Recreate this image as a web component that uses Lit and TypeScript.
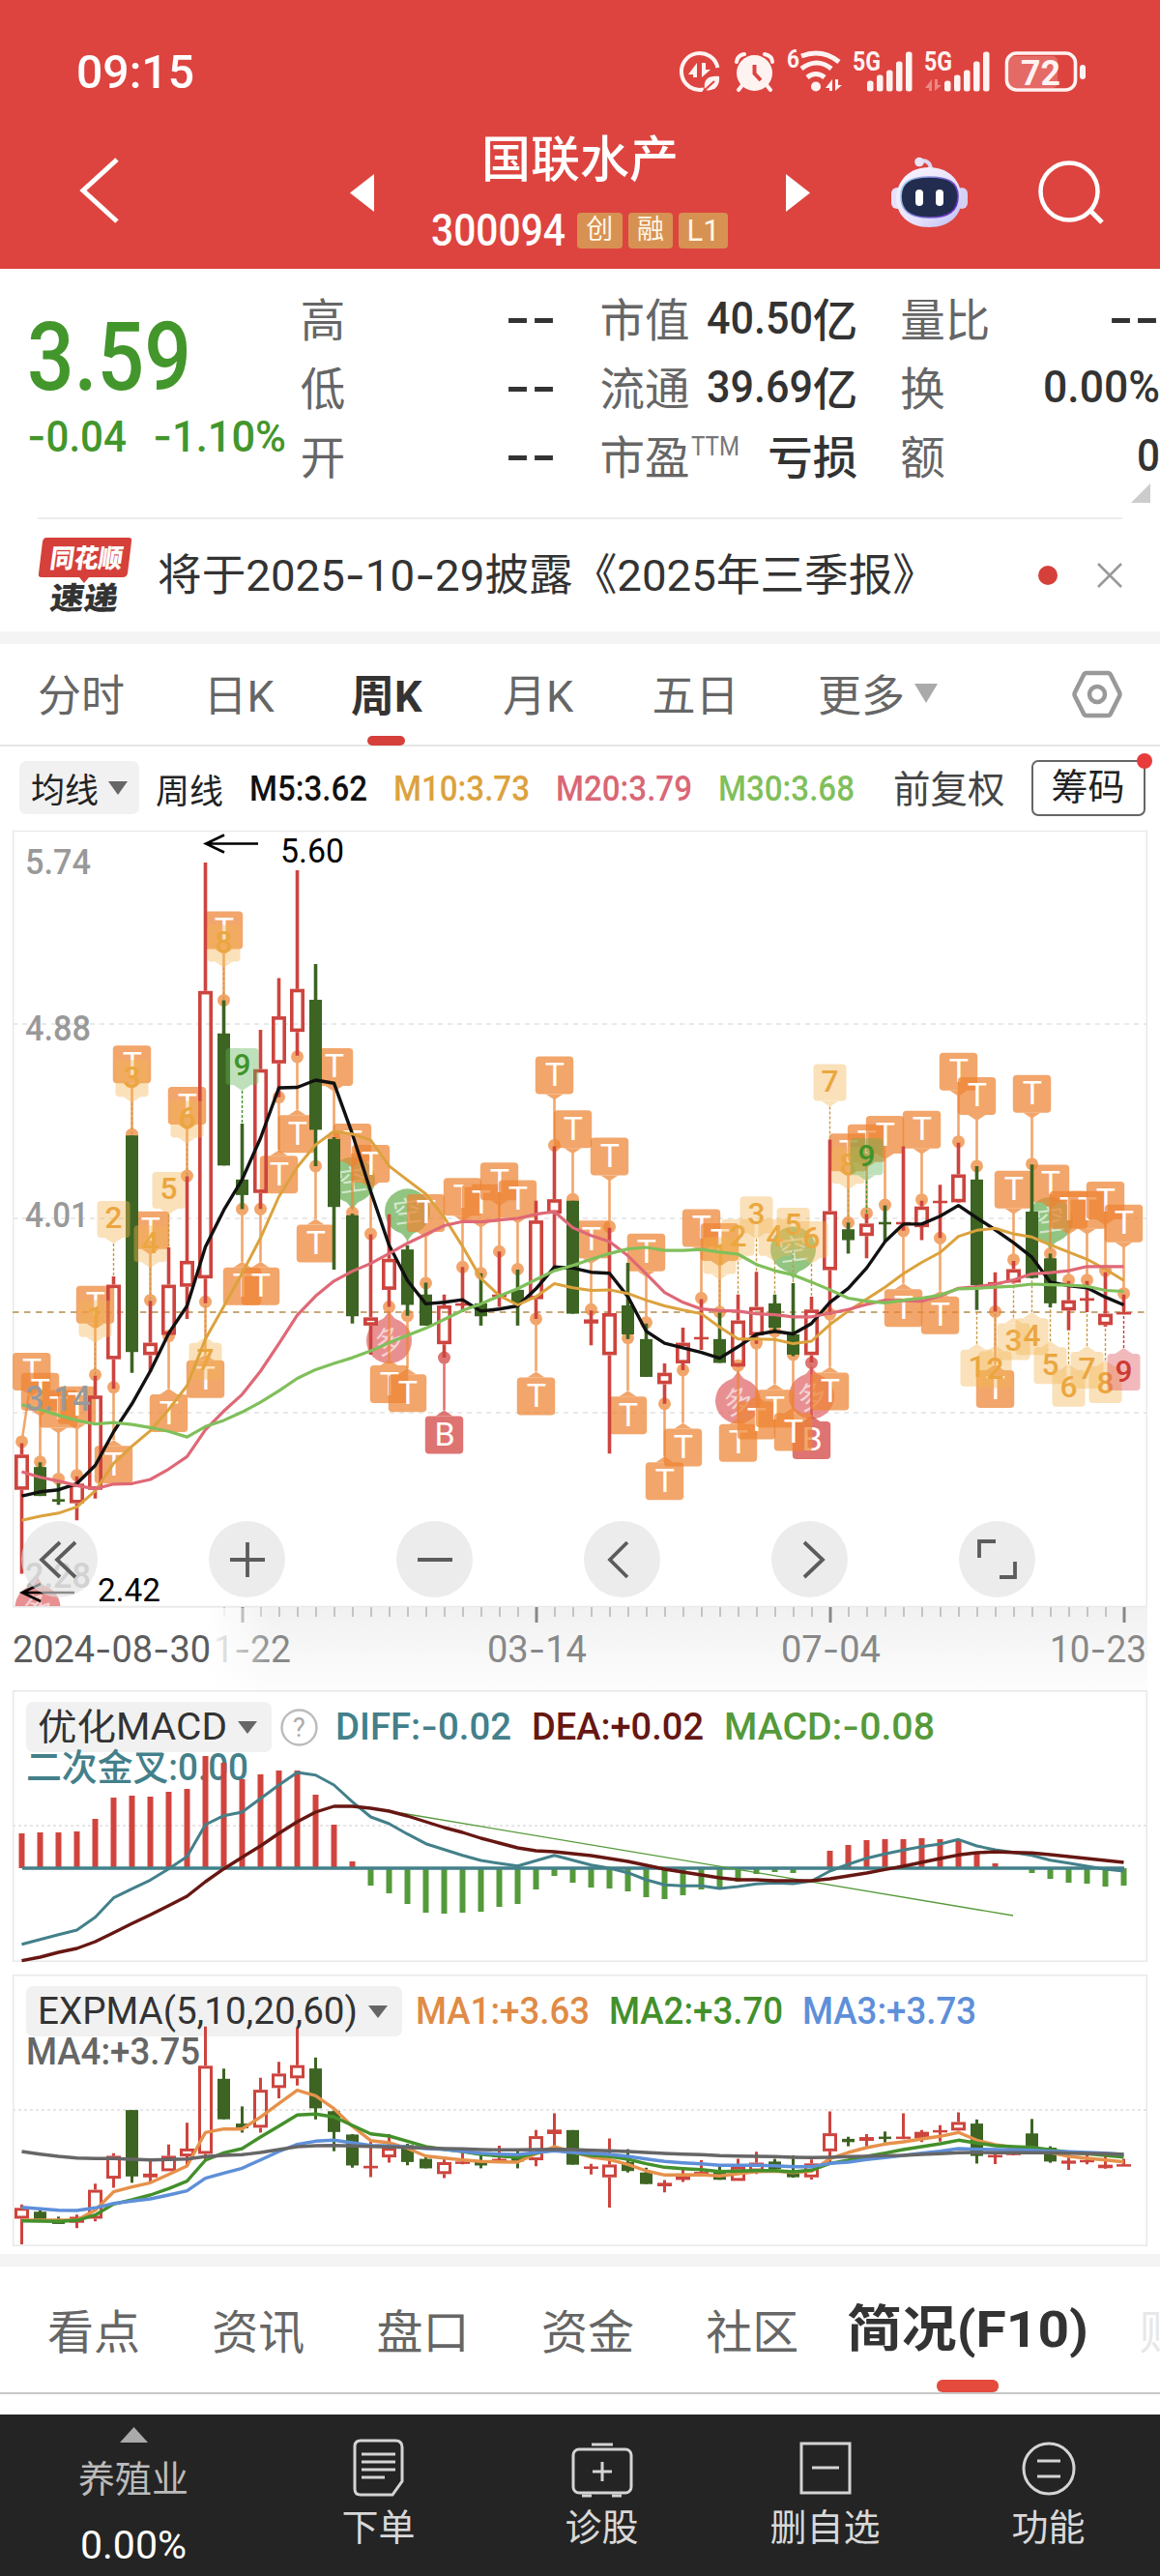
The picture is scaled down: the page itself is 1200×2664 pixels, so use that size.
import { LitElement, html, svg, css } from 'lit';
import { customElement, property } from 'lit/decorators.js';

const STEP = 19;
const FIRST_X = 22.5;
const LAST = 60;
const xAt = (i: number) => FIRST_X + STEP * i;

// 价格刻度 -> 主图像素
const toY = (v: number) => v / 1.8667 - 10;
// MACD / EXPMA 刻度 -> 副图像素
const macdY = (v: number) => v / 3 - 98;
const expY = (v: number) => v / 3 - 22;
const expCandleY = (v: number) => 37.7 + v * 0.1642;

// [涨跌, 最高, 实体上沿, 实体下沿, 最低]
type Candle = [number, number, number, number, number];
const CANDLES: Candle[] = [
  [1, 1218, 1240, 1308, 1470], [0, 1255, 1264, 1320, 1320], [0, 1295, 1326, 1331, 1337], [1, 1282, 1296, 1334, 1367],
  [1, 1088, 1126, 1308, 1325], [1, 896, 912, 1056, 1113], [0, 624, 624, 1042, 1082], [1, 943, 1024, 1048, 1080],
  [1, 840, 912, 1009, 1010], [1, 703, 866, 916, 978], [1, 97, 345, 900, 948], [0, 363, 427, 682, 682],
  [0, 601, 709, 739, 766], [1, 420, 496, 735, 766], [1, 320, 394, 485, 550], [1, 112, 341, 424, 470],
  [0, 293, 362, 613, 683], [0, 627, 631, 762, 883], [0, 775, 778, 973, 987], [1, 815, 975, 991, 1047],
  [1, 776, 862, 922, 955], [0, 836, 844, 951, 972], [0, 908, 931, 991, 991], [1, 931, 952, 1027, 1053],
  [1, 878, 948, 952, 965], [0, 890, 948, 973, 991], [1, 848, 931, 935, 955], [0, 883, 922, 948, 991],
  [1, 750, 788, 940, 978], [1, 645, 747, 775, 878], [0, 750, 750, 968, 968], [1, 962, 979, 987, 1029],
  [1, 802, 967, 1048, 1238], [0, 870, 952, 1008, 1017], [0, 987, 1017, 1090, 1090], [1, 1064, 1082, 1104, 1142],
  [1, 995, 1024, 1064, 1077], [1, 940, 1013, 1017, 1038], [0, 966, 1017, 1063, 1063], [1, 931, 981, 1070, 1071],
  [1, 887, 955, 1010, 1026], [0, 931, 948, 995, 1002], [0, 909, 1008, 1047, 1050], [1, 935, 960, 1048, 1062],
  [1, 632, 770, 884, 970], [0, 792, 805, 826, 852], [1, 775, 794, 818, 861], [0, 759, 791, 794, 828],
  [1, 645, 791, 795, 808], [1, 750, 761, 801, 826], [1, 719, 750, 754, 822], [1, 638, 699, 753, 754],
  [0, 683, 709, 913, 961], [1, 888, 907, 911, 964], [1, 866, 882, 908, 910], [0, 680, 771, 899, 900],
  [0, 852, 861, 948, 956], [1, 905, 942, 962, 1000], [1, 905, 938, 943, 965], [1, 888, 968, 990, 993],
  [1, 931, 965, 969, 969],
];

const M5 = [1320, 1312, 1308, 1296, 1261, 1196, 1142, 1079, 1006, 953, 839, 768, 709, 629, 532, 531, 517, 523, 621, 732, 836, 904, 949, 946, 941, 963, 959, 953, 920, 878, 880, 888, 890, 935, 1002, 1025, 1034, 1043, 1054, 1032, 1008, 1002, 1007, 987, 946, 919, 880, 829, 795, 795, 780, 759, 783, 806, 831, 859, 907, 914, 918, 936, 951];
const M10 = [1367, 1359, 1353, 1341, 1310, 1257, 1224, 1194, 1153, 1107, 1017, 954, 890, 822, 742, 685, 642, 616, 621, 633, 683, 710, 737, 782, 838, 900, 933, 951, 935, 910, 918, 923, 922, 929, 942, 953, 961, 968, 994, 1017, 1017, 1018, 1026, 1021, 989, 963, 940, 917, 891, 869, 850, 819, 807, 803, 814, 820, 835, 849, 863, 882, 904];
const M20 = [1273, 1284, 1291, 1300, 1306, 1297, 1296, 1288, 1268, 1244, 1192, 1156, 1124, 1079, 1026, 971, 934, 905, 886, 871, 852, 832, 815, 798, 790, 791, 787, 784, 776, 771, 802, 817, 829, 856, 891, 927, 946, 959, 962, 963, 968, 970, 974, 974, 967, 960, 950, 942, 943, 944, 934, 919, 916, 911, 903, 891, 889, 885, 877, 877, 877];
const M30 = [1144, 1153, 1164, 1174, 1181, 1178, 1182, 1188, 1195, 1206, 1186, 1174, 1158, 1139, 1117, 1093, 1076, 1064, 1053, 1040, 1024, 1010, 996, 979, 962, 949, 934, 920, 902, 885, 875, 863, 852, 843, 840, 846, 846, 844, 849, 853, 873, 885, 893, 907, 922, 938, 944, 947, 942, 938, 932, 920, 919, 917, 915, 911, 912, 913, 915, 923, 925];

// 卖点 / 买点标记: [序号, 锚点]
const T_ABOVE = [[0, 1215], [1, 1254], [2, 1287], [3, 1280], [4, 1086], [6, 622], [7, 942], [9, 702], [11, 363], [17, 627], [18, 773], [19, 814], [22, 909], [24, 878], [25, 890], [26, 848], [27, 882], [29, 643], [30, 747], [31, 960], [32, 800], [34, 985], [37, 938], [38, 965], [45, 792], [46, 774], [47, 758], [49, 748], [51, 636], [52, 683], [54, 864], [55, 679], [56, 852], [57, 903], [58, 903], [59, 885], [60, 929]];
const T_BELOW = [[5, 1110], [8, 1011], [10, 945], [12, 766], [13, 766], [14, 550], [15, 472], [16, 683], [20, 955], [21, 972], [28, 978], [33, 1015], [35, 1142], [36, 1077], [39, 1068], [40, 1025], [41, 1002], [42, 1047], [44, 969], [48, 808], [50, 822], [53, 964]];
const B_BELOW = [[23, 1053], [43, 1063]];

// 九转序列: [序号, 数字, 方向]
const NINE = [[4, 1, 1], [5, 2, 1], [6, 3, 1], [7, 4, 1], [8, 5, 1], [9, 6, 1], [10, 7, 0], [11, 8, 1], [12, 9, 1],
  [38, 1, 1], [39, 2, 1], [40, 3, 1], [41, 4, 1], [42, 5, 1], [43, 6, 1], [44, 7, 1], [45, 8, 1], [46, 9, 1],
  [52, 1, 0], [53, 2, 0], [54, 3, 0], [55, 4, 0], [56, 5, 0], [57, 6, 0], [58, 7, 0], [59, 8, 0], [60, 9, 0]];

const MACD_BARS = [738, 735, 735, 732, 693, 627, 621, 624, 609, 600, 498, 519, 570, 555, 543, 543, 618, 711, 825, 900, 924, 957, 984, 987, 984, 981, 966, 957, 912, 870, 891, 906, 909, 918, 936, 942, 930, 912, 909, 888, 864, 858, 861, 846, 792, 774, 759, 756, 756, 753, 756, 756, 798, 831, 846, 861, 879, 891, 894, 903, 900];
const DIFF = [1082, 1067, 1052, 1038, 998, 938, 910, 883, 848, 810, 711, 683, 672, 630, 588, 549, 557, 588, 640, 687, 708, 740, 770, 788, 806, 822, 831, 839, 823, 806, 821, 836, 846, 860, 882, 898, 901, 901, 909, 903, 895, 892, 894, 886, 855, 834, 815, 802, 790, 779, 771, 757, 777, 789, 797, 806, 821, 830, 840, 849, 855];
const DEA = [1133, 1122, 1107, 1095, 1074, 1046, 1018, 991, 962, 933, 888, 848, 812, 777, 738, 702, 672, 654, 654, 660, 669, 684, 702, 720, 735, 753, 768, 783, 792, 795, 801, 807, 816, 825, 837, 849, 858, 867, 876, 882, 882, 885, 885, 885, 879, 870, 861, 850, 840, 828, 816, 805, 798, 795, 797, 799, 804, 810, 816, 822, 828];

const MA1 = [828, 828, 828, 828, 797, 740, 725, 712, 686, 660, 556, 545, 545, 508, 466, 425, 442, 482, 537, 581, 588, 605, 629, 635, 641, 646, 647, 648, 622, 600, 617, 632, 640, 655, 675, 688, 688, 687, 691, 684, 677, 676, 680, 676, 637, 618, 603, 592, 585, 576, 568, 556, 580, 594, 602, 604, 618, 630, 636, 641, 647];
const MA2 = [830, 831, 832, 829, 812, 778, 765, 750, 730, 707, 642, 619, 606, 570, 536, 502, 499, 508, 534, 560, 567, 583, 600, 608, 615, 624, 629, 633, 620, 610, 618, 627, 630, 639, 653, 664, 668, 671, 677, 676, 674, 674, 678, 673, 652, 642, 630, 620, 609, 600, 591, 580, 589, 597, 600, 602, 610, 617, 622, 627, 632];
const MA3 = [788, 793, 797, 798, 790, 776, 769, 762, 750, 737, 698, 682, 667, 641, 615, 593, 583, 580, 588, 596, 598, 601, 606, 608, 614, 620, 623, 625, 618, 613, 618, 621, 624, 630, 638, 646, 650, 653, 658, 658, 658, 659, 662, 662, 652, 648, 640, 634, 627, 620, 614, 606, 608, 609, 610, 611, 614, 616, 618, 620, 624];
const MA4 = [615, 623, 630, 635, 637, 637, 639, 641, 640, 638, 631, 627, 625, 618, 609, 600, 597, 596, 598, 599, 601, 602, 604, 606, 607, 609, 610, 610, 609, 608, 609, 611, 613, 615, 618, 621, 623, 625, 628, 629, 630, 631, 633, 634, 633, 631, 630, 628, 627, 624, 622, 619, 618, 619, 619, 619, 619, 620, 621, 622, 624];

const line = (data: number[], y: (v: number) => number, color: string, width = 3.4) => svg`
  <polyline points=${data.map((v, i) => `${xAt(i)},${y(v).toFixed(1)}`).join(' ')}
    fill="none" stroke=${color} stroke-width=${width} stroke-linejoin="round" />`;

// solid: 实体高度不足时填实
const candle = (c: Candle, i: number, y: (v: number) => number, stroke: number, solid = stroke * 2) => {
  const [up, high, top, bottom, low] = c;
  const x = xAt(i);
  const color = up ? '#cd443e' : '#3d6422';
  const t = y(top);
  const h = Math.max(y(bottom) - t, 2.5);
  if (!up) {
    return svg`
      <path d="M${x} ${y(high)}V${y(low)}" stroke=${color} stroke-width=${stroke} />
      <rect x=${x - 6.5} y=${t} width="13" height=${h} fill=${color} />`;
  }
  const thin = h < solid;
  return svg`
    <path d="M${x} ${y(high)}V${thin ? y(low) : t} M${x} ${t + h}V${Math.max(y(low), t + h)}" stroke=${color} stroke-width=${stroke} />
    ${thin
      ? svg`<rect x=${x - 7.5} y=${t} width="15" height=${h} fill=${color} />`
      : svg`<rect x=${x - 7.5 + stroke / 2} y=${t + stroke / 2} width=${15 - stroke} height=${h - stroke} fill="none" stroke=${color} stroke-width=${stroke} />`}`;
};

// 连字符换成较宽的字形
const dashed = (text: string) =>
  text.split(/(-)/).map(p => (p === '-' ? svg`<tspan font-family="Inter">-</tspan>` : p));

// 固定宽度的窄体数字
const fit = (text: string, width: number, size: number, color = 'currentColor', weight = 400) => html`
  <svg class="fit" width=${width} height=${size * 1.2}>
    <text x="0" y=${size * 0.955} textLength=${width} lengthAdjust="spacingAndGlyphs"
      font-size=${size} font-weight=${weight} fill=${color}>${dashed(text)}</text>
  </svg>`;

const label = (text: string, x: number, y: number, width: number, size: number, color: string, weight = 400) => svg`
  <text x=${x} y=${y} textLength=${width} lengthAdjust="spacingAndGlyphs" font-size=${size}
    font-weight=${weight} fill=${color}>${dashed(text)}</text>`;

const caret = (w: number, h: number, color: string) => html`
  <svg width=${w} height=${h} viewBox="0 0 20 14" preserveAspectRatio="none"><path d="M0 0H20L10 14Z" fill=${color} /></svg>`;

const base = css`
  :host {
    display: block;
    font-family: Roboto, 'Noto Sans CJK SC', sans-serif;
    color: #333;
  }

  svg {
    display: block;
    flex: none;
  }

  svg text {
    font-family: Roboto, 'Noto Sans CJK SC', sans-serif;
  }

  .fit {
    overflow: visible;
  }
`;

@customElement('kline-chart')
export class KlineChart extends LitElement {
  static styles = [base, css`
    .stack {
      display: grid;
    }

    .stack > * {
      grid-area: 1 / 1;
    }

    .controls {
      display: flex;
      align-items: flex-start;
      gap: 115px;
      padding: 723px 0 0 22px;
    }

    .control {
      width: 79px;
      height: 79px;
      border-radius: 50%;
      background: rgba(224, 224, 224, 0.62);
    }
  `];

  private _tag(i: number, anchor: number, above: boolean, letter: string) {
    const x = xAt(i);
    const bx = Math.max(x, 32.7);
    const y = toY(anchor);
    const top = above ? y - 92 : y + 60.5;
    const edge = above ? top + 44 : top - 6;
    const color = letter === 'B' ? '#d2403d' : '#ee8433';
    const tip = above
      ? `M${bx - 9} ${top + 39}L${bx} ${top + 45}L${bx + 9} ${top + 39}Z`
      : `M${bx - 9} ${top}L${bx} ${top - 6}L${bx + 9} ${top}Z`;
    return svg`
      <g fill=${color} opacity="0.72">
        <path d="M${bx === x ? x : bx - 3} ${edge}L${x} ${y}" stroke=${color} stroke-width="2.6" />
        <circle cx=${x} cy=${y} r="6.5" />
        <rect x=${bx - 19.7} y=${top} width="39.4" height="39" rx="4" />
        <path d=${tip} />
      </g>
      <text x=${bx + 0.5} y=${top + 30.5} text-anchor="middle" font-size="34" fill="#fff">${letter}</text>`;
  }

  private _nine(i: number, n: number, up: number) {
    const x = xAt(i);
    const c = CANDLES[i];
    const y = up ? toY(c[1]) : toY(c[4]);
    const top = up ? y - 78 : y + 41;
    const nine = n === 9;
    const fill = !nine ? '#f3b553' : up ? '#5eb656' : '#e0525a';
    const ink = !nine ? '#eba63f' : up ? '#3f9329' : '#cf3a35';
    const tip = up
      ? `M${x - 9} ${top + 38}L${x} ${top + 44}L${x + 9} ${top + 38}Z`
      : `M${x - 9} ${top}L${x} ${top - 6}L${x + 9} ${top}Z`;
    return svg`
      <path d="M${x} ${up ? top + 44 : top - 6}V${y}" stroke=${nine ? ink : '#c79a44'} stroke-width="1.4" stroke-dasharray="3 2" />
      <g fill=${fill} opacity="0.4">
        <rect x=${x - 17} y=${top} width="34" height="38" rx="4" />
        <path d=${tip} />
      </g>
      <text x=${x - 9} y=${top + 28.5} font-size="31" font-weight="500" fill=${ink}
        textLength="18" lengthAdjust="spacingAndGlyphs">${n}</text>`;
  }

  private _drop(i: number, long: boolean) {
    const x = Math.max(xAt(i), 39);
    const c = CANDLES[i];
    const tipY = long ? toY(c[4]) + 3 : toY(c[1]) - 3;
    const y = long ? tipY + 32 : tipY - 32;
    const s = long ? -1 : 1;
    return svg`
      <g fill=${long ? '#e06668' : '#67b052'} opacity="0.72">
        <circle cx=${x} cy=${y} r="23.5" />
        <path d="M${x - 14} ${y + s * 18}Q${x - 3} ${y + s * 23} ${x} ${tipY}Q${x + 3} ${y + s * 23} ${x + 14} ${y + s * 18}Z" />
      </g>
      <text x=${x} y=${y + 11} text-anchor="middle" font-size="30" fill="#fff" opacity="0.6"
        transform="rotate(${long ? -20 : -8} ${x} ${y})">${long ? '多' : '空'}</text>`;
  }

  render() {
    const ticks = Array.from({ length: LAST - 10 }, (_, k) => k + 11);
    return html`
      <div class="stack">
        <svg width="1200" height="898">
          <defs>
            <linearGradient id="axis" x1="0" y1="0" x2="0" y2="1">
              <stop offset="0" stop-color="#f1f1f1" /><stop offset="1" stop-color="#fdfdfd" />
            </linearGradient>
            <linearGradient id="fade" x1="0" y1="0" x2="1" y2="0">
              <stop offset="0.75" stop-color="#fff" /><stop offset="1" stop-color="#fff" stop-opacity="0" />
            </linearGradient>
            <clipPath id="plot"><rect x="13" y="0" width="1187" height="811" /></clipPath>
          </defs>
          <rect x="13.75" y="9.5" width="1172.5" height="802" fill="#fff" stroke="#e9e9e9" stroke-width="1.5" />
          ${[409, 784, 1159].map(v => svg`<path d="M13 ${toY(v)}H1186" stroke="#e9e9e9" stroke-width="2" stroke-dasharray="5 5" />`)}
          <path d="M13 507H1186" stroke="#c6a877" stroke-width="1.8" stroke-dasharray="6.5 5.5" />

          <g clip-path="url(#plot)">
            ${[18, 21, 42, 56].map(i => this._drop(i, false))}
            ${[0, 20, 39, 43].map(i => this._drop(i, true))}
            ${B_BELOW.map(([i, v]) => this._tag(i, v, false, 'B'))}
            ${T_ABOVE.map(([i, v]) => this._tag(i, v, true, 'T'))}
            ${T_BELOW.map(([i, v]) => this._tag(i, v, false, 'T'))}
            ${CANDLES.map((c, i) => candle(c, i, toY, 3.6, 6))}
            ${NINE.map(([i, n, up]) => this._nine(i, n, up))}
          </g>
          ${line(M5, toY, '#111')}
          ${line(M10, toY, '#dca23d', 3)}
          ${line(M20, toY, '#df6876', 3.2)}
          ${line(M30, toY, '#80bf5b', 3.2)}

          ${label('5.74', 26, 54, 68, 37, '#999', 500)}
          ${label('4.88', 26, 226, 68, 37, '#999', 500)}
          ${label('4.01', 26, 419, 66, 37, '#999', 500)}
          ${label('3.14', 26, 609, 68, 37, '#999', 500)}
          ${label('2.28', 26, 792, 68, 37, '#bbb', 500)}
          <path d="M267 22.5H213M232 13.5L213 22.5L232 31.5" fill="none" stroke="#000" stroke-width="2.6" />
          ${label('5.60', 290, 42, 66, 35, '#000')}
          <path d="M77 797H23M42 788L23 797L42 806" fill="none" stroke="#000" stroke-width="2.6" />
          ${label('2.42', 101, 806, 65, 34, '#000')}

          <rect x="13" y="812" width="1174" height="86" fill="url(#axis)" />
          ${ticks.map(i => {
            const major = (i - 12) % 16 === 0;
            return svg`<path d="M${xAt(i) + 0.5} 812v${major ? 16 : 10}" stroke=${major ? '#888' : '#c4c4c4'} stroke-width=${major ? 3 : 2} />`;
          })}
          ${label('11-22', 200, 869, 101, 38, '#888')}
          ${label('03-14', 504, 869, 103, 38, '#888')}
          ${label('07-04', 808, 869, 103, 38, '#888')}
          ${label('10-23', 1086, 869, 100, 38, '#888')}
          <rect x="0" y="813" width="284" height="85" fill="url(#fade)" />
          ${label('2024-08-30', 13, 869, 205, 38, '#5c5c5c')}
        </svg>
        <div class="controls">
          ${[
            'M40 22L21 40L40 58M56 22L37 40L56 58',
            'M40 22V58M22 40H58',
            'M22 40H58',
            'M45 22L27 40L45 58',
            'M34 22L53 40L34 58',
            'M21 38V21H38M42 58H58V42',
          ].map(d => html`
            <div class="control">
              <svg width="79" height="79"><path d=${d} fill="none" stroke="#5c5c5c" stroke-width="3.8" /></svg>
            </div>`)}
        </div>
      </div>
    `;
  }
}

@customElement('indicator-panel')
export class IndicatorPanel extends LitElement {
  @property({ type: String })
  kind = 'macd';

  static styles = [base, css`
    .panel {
      display: grid;
      height: 281px;
    }

    .panel > * {
      grid-area: 1 / 1;
    }

    .legend {
      padding: 12px 0 0 27px;
    }

    .row {
      display: flex;
      align-items: center;
      height: 52px;
    }

    .picker {
      display: flex;
      align-items: center;
      box-sizing: border-box;
      gap: 11px;
      height: 52px;
      padding: 0 15px 0 12px;
      border-radius: 7px;
      background: #f1f1f1;
    }

    .help {
      margin: 0 18px 0 9px;
    }

    .values {
      display: flex;
      gap: 21px;
    }

    .values.ma {
      gap: 20px;
      margin-left: 14px;
    }

    .second {
      margin-top: -7px;
    }

    .plot {
      overflow: visible;
    }
  `];

  private _frame(content: unknown, mid: number) {
    return html`
      <svg class="plot" width="1200" height="281">
        <rect x="13.75" y="0.75" width="1172.5" height="279.5" fill="none" stroke="#e9e9e9" stroke-width="1.6" />
        <path d="M13 ${mid}H1186" stroke="#e6e6e6" stroke-width="1.8" stroke-dasharray="3 3" />
        ${content}
      </svg>`;
  }

  private _macd() {
    return html`
      <div class="panel">
        <div class="legend">
          <div class="row">
            <div class="picker">${fit('优化MACD', 196, 38)}${caret(20, 13, '#666')}</div>
            <svg class="help" width="39" height="39">
              <circle cx="19.5" cy="19.5" r="18" fill="none" stroke="#bbb" stroke-width="2.4" />
              <text x="19.5" y="29" text-anchor="middle" font-size="27" fill="#aaa">?</text>
            </svg>
            <div class="values">
              ${fit('DIFF:-0.02', 182, 38, '#43808a', 500)}
              ${fit('DEA:+0.02', 178, 38, '#671712', 500)}
              ${fit('MACD:-0.08', 218, 38, '#559a3a', 500)}
            </div>
          </div>
          <div class="second">${fit('二次金叉:0.00', 230, 38, '#43808a', 500)}</div>
        </div>
        ${this._frame(svg`
          ${MACD_BARS.map((v, i) => {
            const up = v < 846;
            return svg`<path d="M${xAt(i)} 184V${macdY(v)}" stroke=${up ? '#d0443d' : '#559a3a'} stroke-width="6" />`;
          })}
          <path d="M23 184H1163" stroke="#43808a" stroke-width="3.6" />
          <path d="M415 127L1048 233" stroke="#559a3a" stroke-width="1.3" />
          ${line(DIFF, macdY, '#43808a', 3)}
          ${line(DEA, macdY, '#671712')}`, 140)}
      </div>`;
  }

  private _expma() {
    return html`
      <div class="panel">
        <div class="legend">
          <div class="row">
            <div class="picker">${fit('EXPMA(5,10,20,60)', 331, 38)}${caret(20, 13, '#666')}</div>
            <div class="values ma">
              ${fit('MA1:+3.63', 180, 38, '#e08b45', 500)}
              ${fit('MA2:+3.70', 180, 38, '#43902b', 500)}
              ${fit('MA3:+3.73', 180, 38, '#5e8fd9', 500)}
            </div>
          </div>
          <div class="second">${fit('MA4:+3.75', 180, 38, '#666', 500)}</div>
        </div>
        ${this._frame(svg`
          ${CANDLES.map((c, i) => candle(c, i, expCandleY, 3, 7))}
          ${line(MA1, expY, '#e6914b')}
          ${line(MA2, expY, '#43902b')}
          ${line(MA3, expY, '#5e8fd9')}
          ${line(MA4, expY, '#666')}`, 140)}
      </div>`;
  }

  render() {
    return this.kind === 'macd' ? this._macd() : this._expma();
  }
}

@customElement('app-root')
export class AppRoot extends LitElement {
  static styles = [base, css`
    :host {
      width: 1200px;
      height: 2664px;
      overflow: hidden;
      background: #fff;
      white-space: nowrap;
    }

    .header {
      box-sizing: border-box;
      height: 278px;
      background: #dd443f;
      color: #fff;
    }

    .status {
      display: flex;
      align-items: center;
      box-sizing: border-box;
      height: 134px;
      padding: 12px 0 0 79px;
    }

    .status-icons {
      margin-left: 499px;
    }

    .nav {
      display: flex;
      align-items: center;
      height: 130px;
    }

    .back { margin-left: 78px; }
    .prev { margin-left: 230px; }
    .next { margin-left: 60px; }
    .robot { margin-left: 82px; }
    .search { margin-left: 70px; }

    .title {
      display: flex;
      flex-direction: column;
      align-items: center;
      width: 306px;
      height: 130px;
      margin-left: 60px;
    }

    .name {
      height: 63px;
      margin-bottom: 23px;
      line-height: 63px;
      font-size: 51px;
      font-weight: 500;
    }

    .code {
      display: flex;
      align-items: center;
      width: 306px;
      height: 37px;
      gap: 6px;
    }

    .code .fit {
      margin: 0 6px 2px -1px;
    }

    .badge {
      width: 47px;
      height: 37px;
      border-radius: 4px;
      background: #d79152;
      color: #fff6e6;
      font-size: 28px;
      line-height: 35px;
      text-align: center;
    }

    .badge.wide {
      width: 51px;
      font-size: 31px;
      line-height: 38px;
    }

    .quote {
      display: flex;
      position: relative;
      box-sizing: border-box;
      height: 257px;
      padding-top: 14px;
    }

    .price {
      width: 283px;
      padding-left: 28px;
      color: #43962b;
    }

    .last {
      padding: 17px 0 0;
    }

    .change {
      display: flex;
      justify-content: space-between;
      width: 268px;
      margin-top: -3px;
    }

    .stats {
      margin-right: 44px;
    }

    .stats.range { width: 266px; }
    .stats.value { width: 267px; }

    .stats.volume {
      width: 269px;
      margin: 0;
    }

    .stat {
      display: flex;
      align-items: center;
      justify-content: space-between;
      height: 71px;
      font-size: 46.5px;
      font-weight: 500;
      color: #333;
    }

    .stat .key {
      font-weight: 400;
      color: #666;
      display: flex;
    }

    .num {
      display: flex;
      align-items: center;
    }

    .num .fit {
      margin-top: 2px;
    }

    .ttm {
      padding: 9px 0 0 2px;
    }

    .corner {
      position: absolute;
      right: 10px;
      bottom: 15px;
    }

    .notice {
      display: flex;
      align-items: center;
      box-sizing: border-box;
      height: 118px;
      margin: 0 39px;
      border-top: 2px solid #ececec;
    }

    .notice-text { margin-left: 26px; }

    .dot {
      width: 20px;
      height: 20px;
      margin-left: auto;
      border-radius: 50%;
      background: #d5403a;
    }

    .close { margin-left: 41px; }

    .band {
      height: 13px;
      background: #f4f4f4;
    }

    .periods {
      display: flex;
      align-items: center;
      box-sizing: border-box;
      height: 106px;
      padding: 0 39px;
      border-bottom: 2px solid #e6e6e6;
      font-size: 45px;
      color: #666;
    }

    .tabs {
      display: flex;
      justify-content: space-between;
      width: 931px;
      margin-top: -3px;
    }

    .tab {
      position: relative;
      display: flex;
      align-items: center;
      gap: 10px;
    }

    .tab.on {
      margin: 0 2px 0 -2px;
      font-weight: 700;
      color: #333;
    }

    .tab.on::after {
      content: '';
      position: absolute;
      left: 50%;
      bottom: -22px;
      width: 39px;
      height: 10px;
      margin-left: -20px;
      border-radius: 5px;
      background: #d5403a;
    }

    .settings { margin-left: auto; }

    .averages {
      display: flex;
      align-items: center;
      box-sizing: border-box;
      height: 78px;
      padding: 7px 0 0 20px;
      font-size: 35px;
      color: #222;
    }

    .picker {
      display: flex;
      align-items: center;
      justify-content: center;
      gap: 10px;
      width: 124px;
      height: 55px;
      border-radius: 7px;
      background: #f1f1f1;
    }

    .weekly { margin: 2px 27px 0 17px; }

    .mas {
      display: flex;
      gap: 27px;
      margin-top: 3px;
    }

    .adjust {
      margin: -3px 0 0 40px;
      font-size: 38.5px;
      color: #444;
    }

    .chips {
      position: relative;
      box-sizing: border-box;
      width: 118px;
      height: 58px;
      margin-left: 27px;
      border: 2px solid #666;
      border-radius: 7px;
      font-size: 38px;
      line-height: 53px;
      text-align: center;
    }

    .chips::after {
      content: '';
      position: absolute;
      top: -9px;
      right: -9px;
      width: 16px;
      height: 16px;
      border-radius: 50%;
      background: #e83c3c;
    }

    .gap { height: 13px; }
    .gap.small { height: 8px; }

    .sections {
      display: flex;
      align-items: center;
      box-sizing: border-box;
      height: 132px;
      border-bottom: 2px solid #c8c8c8;
      padding: 0 0 2px 49px;
      overflow: hidden;
      font-size: 48px;
      color: #666;
    }

    .section {
      flex: none;
      width: 170.3px;
    }

    .section.on {
      position: relative;
      width: 250px;
      margin-left: -24px;
      font-weight: 700;
      color: #333;
    }

    .section.on::after {
      content: '';
      position: absolute;
      left: 93px;
      bottom: -35px;
      width: 64px;
      height: 13px;
      border-radius: 6px;
      background: #e44b3d;
    }

    .section.next-one {
      margin: 0 0 0 52px;
      opacity: 0.15;
    }

    .bottom {
      display: grid;
      grid-template-columns: 276px repeat(4, 231px);
      height: 167px;
      margin-top: 21px;
      background: #242424;
      color: #d8d8d8;
      font-size: 38px;
    }

    .item {
      display: flex;
      flex-direction: column;
      align-items: center;
      padding-top: 23px;
    }

    .item .text {
      margin-top: 2px;
      line-height: 56px;
    }

    .industry {
      display: flex;
      flex-direction: column;
      align-items: center;
      padding-top: 13px;
      line-height: 56px;
      color: #bbb;
    }

    .industry .name-row {
      margin: 10px 0 16px;
    }
  `];

  private _statusIcons() {
    return svg`
      <svg width="430" height="54" viewBox="700 45 430 54" fill="#fff3f2">
        <path d="M742.500 69A19 19 0 1 0 728 91.500" fill="none" stroke="#fff3f2" stroke-width="4" />
        <path d="M712 76L721 64V79H717V76ZM726 64V79L735 71H730V64Z" />
        <path d="M729 92C727 79 735 77 744 78C745 88 739 94 729 92Z" />
        <path d="M727 94L739 83" stroke="#dd443f" stroke-width="2" />
        <circle cx="780.500" cy="74.500" r="18.500" />
        <path d="M762 63Q763 56 770 55M791 55Q799 57 799 63M768 87L764 92M793 87L797 92" fill="none" stroke="#fff3f2" stroke-width="4" stroke-linecap="round" />
        <path d="M780.500 66V75L787 82" fill="none" stroke="#dd443f" stroke-width="4" />
        <text x="814" y="69" font-size="25" font-weight="700" textLength="13" lengthAdjust="spacingAndGlyphs">6</text>
        <circle cx="844" cy="88.500" r="5" />
        <path d="M835 79Q844 72 853 79M829 70Q845 58 860 70M829 57Q850 49 868 63" fill="none" stroke="#fff3f2" stroke-width="5" />
        <path d="M854 90L861 81V93H858V90ZM864 81V93L871 87H867V81Z" />
        ${[882, 956].map((x, k) => svg`
          <text x=${x} y="72" font-size="28" font-weight="700" textLength="29" lengthAdjust="spacingAndGlyphs">5G</text>
          ${[11, 17, 22, 31, 41].map((h, i) => svg`<rect x=${897 + k * 80 + i * 10} y=${93.5 - h} width="6.500" height=${h} rx="2.500" />`)}`)}
        <path d="M957 90L964 81V93H961V90ZM967 81V93L974 87H970V81Z" opacity="0.4" />
        <rect x="1044" y="57" width="50" height="33" rx="5" opacity="0.22" />
        <rect x="1041.500" y="54" width="71" height="38" rx="10" fill="none" stroke="#fff3f2" stroke-width="3.600" />
        <rect x="1117" y="66" width="6" height="15" rx="3" />
        <text x="1056" y="86.500" font-size="37" font-weight="700" textLength="41" lengthAdjust="spacingAndGlyphs">72</text>
      </svg>`;
  }

  private _robot() {
    return svg`
      <svg width="83" height="78" viewBox="0 0 83 78">
        <defs>
          <linearGradient id="head" x1="0" y1="0" x2="1" y2="1">
            <stop offset="0" stop-color="#fbf6ff" /><stop offset="0.6" stop-color="#e6e1fa" /><stop offset="1" stop-color="#b9bcf2" />
          </linearGradient>
          <linearGradient id="rim" x1="0" y1="0" x2="1" y2="0.4">
            <stop offset="0" stop-color="#9fd6ef" /><stop offset="1" stop-color="#6a35c9" />
          </linearGradient>
        </defs>
        <path d="M30 7Q42 4 43 15" fill="none" stroke="#ddd6f0" stroke-width="4" />
        <circle cx="31" cy="7.500" r="4.800" fill="#e9e3f6" />
        <rect x="2" y="34" width="12" height="22" rx="6" fill="#e6e1fa" />
        <rect x="69" y="34" width="12" height="22" rx="6" fill="#d5d0f4" />
        <path d="M41 13C62 13 74 27 75 45C75 62 63 75 41 75C20 75 7 62 7 45C8 27 20 13 41 13Z" fill="url(#head)" />
        <path d="M41 23C62 23 71 29 71 43C71 58 62 65 41 65C21 65 12 58 12 43C12 29 21 23 41 23Z" fill="#222c4e" stroke="url(#rim)" stroke-width="1.600" />
        <rect x="27" y="36" width="8" height="17" rx="4" fill="#fff" />
        <rect x="48" y="36" width="8" height="17" rx="4" fill="#fff" />
      </svg>`;
  }

  private _logo() {
    return svg`
      <svg width="98" height="80" viewBox="39 553 98 80">
        <path d="M48 554H133Q137 554 136 558L132 591Q131 595 127 595H92L87 601L82 595H43Q39 595 40 591L44 558Q45 554 48 554Z" fill="#d5403a" />
        <g transform="skewX(-8)" font-weight="900">
          <text x="133" y="585" font-size="27" fill="#fff" textLength="75" lengthAdjust="spacingAndGlyphs">同花顺</text>
          <text x="139" y="628" font-size="32" fill="#333" textLength="70" lengthAdjust="spacingAndGlyphs">速递</text>
        </g>
      </svg>`;
  }

  private _stat(key: unknown, value: unknown) {
    return html`<div class="stat"><span class="key">${key}</span><span class="num">${value}</span></div>`;
  }

  private _menuIcon(name: string) {
    const shapes: Record<string, unknown> = {
      order: svg`<path d="M10 4H46Q53 4 53 11V46L43 60H10Q4 60 4 54V10Q4 4 10 4ZM11 18H46M11 26H46M11 34H46M11 42H35" />`,
      doctor: svg`<rect x="-1" y="13" width="60" height="45" rx="6" /><path d="M18 8H40M8 61H18M39 61H49M29 26V46M19 36H39" />`,
      remove: svg`<rect x="4" y="7" width="50" height="51" /><path d="M15 32H43" />`,
      more: svg`<circle cx="29" cy="33" r="26" /><path d="M17 25H41M17 41H41" />`,
    };
    return html`
      <svg width="58" height="64" viewBox="0 0 58 64" overflow="visible" fill="none" stroke="#d4d4d4" stroke-width="3">${shapes[name]}</svg>`;
  }

  render() {
    const dashes = fit('--', 54, 54, '#333', 500);
    return html`
      <div class="header">
        <div class="status">
          ${fit('09:15', 122, 49, '#fff', 500)}
          <div class="status-icons">${this._statusIcons()}</div>
        </div>
        <div class="nav">
          <svg class="back" width="54" height="74"><path d="M43 3L8 35L43 67" fill="none" stroke="#fff" stroke-width="5" /></svg>
          <svg class="prev" width="25" height="39"><path d="M25 0V39L0 19.500Z" fill="#fff" /></svg>
          <div class="title">
            <div class="name">国联水产</div>
            <div class="code">
              ${fit('300094', 139, 46, '#fff', 500)}
              <div class="badge">创</div>
              <div class="badge">融</div>
              <div class="badge wide">L1</div>
            </div>
          </div>
          <svg class="next" width="25" height="39"><path d="M0 0V39L25 19.500Z" fill="#fff" /></svg>
          <div class="robot">${this._robot()}</div>
          <svg class="search" width="72" height="68"><circle cx="33" cy="33" r="29.500" fill="none" stroke="#fff" stroke-width="4.500" /><path d="M54 52L67 65" stroke="#fff" stroke-width="5" /></svg>
        </div>
      </div>

      <div class="quote">
        <div class="price">
          <div class="last">${fit('3.59', 170, 98, '#43962b', 500)}</div>
          <div class="change">${fit('-0.04', 103, 45, '#43962b', 500)}${fit('-1.10%', 138, 45, '#43962b', 500)}</div>
        </div>
        <div class="stats range">
          ${this._stat('高', dashes)}
          ${this._stat('低', dashes)}
          ${this._stat('开', dashes)}
        </div>
        <div class="stats value">
          ${this._stat('市值', html`${fit('40.50', 110, 47, '#333', 500)}亿`)}
          ${this._stat('流通', html`${fit('39.69', 110, 47, '#333', 500)}亿`)}
          ${this._stat(html`市盈<span class="ttm">${fit('TTM', 50, 27, '#777')}</span>`, '亏损')}
        </div>
        <div class="stats volume">
          ${this._stat('量比', dashes)}
          ${this._stat('换', fit('0.00%', 121, 47, '#333', 500))}
          ${this._stat('额', fit('0', 24, 47, '#333', 500))}
        </div>
        <svg class="corner" width="20" height="20"><path d="M20 0V20H0Z" fill="#ccc" /></svg>
      </div>

      <div class="notice">
        ${this._logo()}
        <div class="notice-text">${fit('将于2025-10-29披露《2025年三季报》', 806, 45, '#333')}</div>
        <div class="dot"></div>
        <svg class="close" width="26" height="26"><path d="M1 1L25 25M25 1L1 25" stroke="#999" stroke-width="2.600" /></svg>
      </div>
      <div class="band"></div>

      <div class="periods">
        <div class="tabs">
          ${['分时', '日K', '周K', '月K', '五日'].map(t => html`<div class="tab ${t === '周K' ? 'on' : ''}">${t}</div>`)}
          <div class="tab">更多${caret(24, 20, '#aaa')}</div>
        </div>
        <svg class="settings" width="52" height="50" fill="none" stroke="#999" stroke-width="4.500">
          <path d="M15 3H37Q39 3 40 5L49 23Q50 25 49 27L40 45Q39 47 37 47H15Q13 47 12 45L3 27Q2 25 3 23L12 5Q13 3 15 3Z" />
          <circle cx="26" cy="25" r="8" />
        </svg>
      </div>

      <div class="averages">
        <div class="picker">均线${caret(20, 14, '#666')}</div>
        <div class="weekly">周线</div>
        <div class="mas">
          ${fit('M5:3.62', 122, 36, '#111', 500)}
          ${fit('M10:3.73', 141, 36, '#dca23d', 500)}
          ${fit('M20:3.79', 141, 36, '#d96775', 500)}
          ${fit('M30:3.68', 141, 36, '#80bf5b', 500)}
        </div>
        <div class="adjust">前复权</div>
        <div class="chips">筹码</div>
      </div>

      <kline-chart></kline-chart>
      <indicator-panel kind="macd"></indicator-panel>
      <div class="gap"></div>
      <indicator-panel kind="expma"></indicator-panel>
      <div class="gap small"></div>
      <div class="band"></div>

      <div class="sections">
        ${['看点', '资讯', '盘口', '资金', '社区'].map(t => html`<div class="section">${t}</div>`)}
        <div class="section on">${fit('简况(F10)', 250, 52, '#333', 700)}</div>
        <div class="section next-one">财</div>
      </div>

      <div class="bottom">
        <div class="industry">
          <svg width="29" height="16"><path d="M14.500 0L29 16H0Z" fill="#aaa" /></svg>
          <div class="name-row">养殖业</div>
          ${fit('0.00%', 110, 40, '#fff')}
        </div>
        <div class="item">${this._menuIcon('order')}<div class="text">下单</div></div>
        <div class="item">${this._menuIcon('doctor')}<div class="text">诊股</div></div>
        <div class="item">${this._menuIcon('remove')}<div class="text">删自选</div></div>
        <div class="item">${this._menuIcon('more')}<div class="text">功能</div></div>
      </div>
    `;
  }
}

declare global {
  interface HTMLElementTagNameMap {
    'app-root': AppRoot;
    'kline-chart': KlineChart;
    'indicator-panel': IndicatorPanel;
  }
}
